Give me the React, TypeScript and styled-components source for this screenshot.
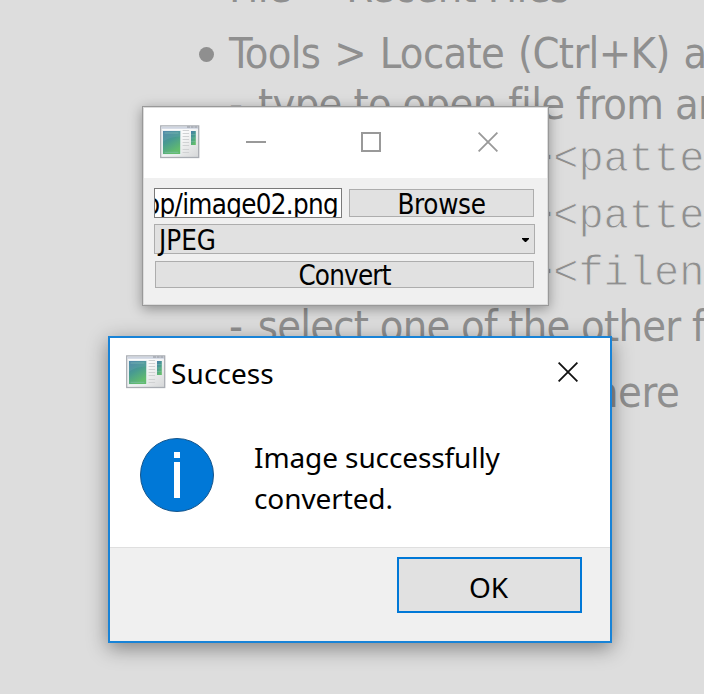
import React from 'react';
import styled, { createGlobalStyle } from 'styled-components';

const GlobalStyle = createGlobalStyle`
  * { box-sizing: border-box; }
  body { margin: 0; overflow: hidden; background: #dddddd; }
  button, input { font: inherit; margin: 0; padding: 0; border-radius: 0; }
`;

const uiFont = '"DejaVu Sans Condensed", "DejaVu Sans", sans-serif';
const dialogFont = '"Noto Sans", "Open Sans", sans-serif';

const Desktop = styled.main`
  position: relative;
  width: 704px;
  height: 694px;
  overflow: hidden;
  background: #dddddd;
`;

const Notes = styled.div`
  display: flex;
  flex-direction: column;
  padding-left: 229px;
  color: #8f8f8f;
`;

const Line = styled.div<{ $gap: number; $tracking?: number; $indent?: number; $words?: number }>`
  display: flex;
  align-items: center;
  flex-shrink: 0;
  height: 50px;
  margin-top: ${(p) => p.$gap}px;
  margin-left: ${(p) => p.$indent ?? 0}px;
  font: 43px/50px ${uiFont};
  letter-spacing: ${(p) => p.$tracking ?? 0}px;
  word-spacing: ${(p) => p.$words ?? 0}px;
  white-space: pre;
`;

const CodeLine = styled(Line)`
  font: 42px/50px "Liberation Mono", monospace;
  -webkit-text-stroke: 0.9px #dddddd;
`;

const Bullet = styled.span`
  flex: none;
  width: 15px;
  height: 15px;
  margin: 2px 15px 0 -30px;
  border-radius: 50%;
  background: #8f8f8f;
`;

const Dash = styled.span`
  flex: none;
  margin-right: 4px;
`;

const ConverterWindow = styled.section`
  position: absolute;
  left: 142px;
  top: 106px;
  width: 407px;
  height: 200px;
  display: flex;
  flex-direction: column;
  border: 1px solid #999999;
  background: #f0f0f0;
  box-shadow: inset 0 0 0 1px #dcdcdc, 0 3px 12px rgba(0, 0, 0, 0.36);
`;

const TitleBar = styled.header`
  display: flex;
  align-items: center;
  flex-shrink: 0;
  height: 70px;
  margin: 1px 1px 0;
  padding: 0 49px 2px 16px;
  background: #ffffff;
`;

const WindowControls = styled.div`
  display: flex;
  flex: 1;
  justify-content: space-between;
  margin-left: 46px;
`;

const Form = styled.div`
  display: flex;
  flex-direction: column;
  padding: 10px 13px 0 11px;
  font: 27.5px/30px ${uiFont};
  color: #000;
`;

const FileRow = styled.div`
  display: flex;
  align-items: center;
  height: 30px;
  gap: 7px;
  padding-right: 1px;
`;

const PathField = styled.div`
  display: flex;
  justify-content: flex-end;
  width: 188px;
  height: 30px;
  padding-right: 3px;
  overflow: hidden;
  border: 1px solid #7a7a7a;
  background: #fff;
  line-height: 31px;
  letter-spacing: -0.7px;
  white-space: nowrap;
`;

const FlatButton = styled.button<{ $wide?: boolean }>`
  display: flex;
  align-items: center;
  justify-content: center;
  flex: ${(p) => (p.$wide ? 'none' : 1)};
  height: ${(p) => (p.$wide ? 27 : 28)}px;
  margin: ${(p) => (p.$wide ? '7px 1px 0 1px' : '0')};
  border: 1px solid #adadad;
  background: #e1e1e1;
  color: #000;
  letter-spacing: ${(p) => (p.$wide ? -0.8 : -0.3)}px;
  line-height: 27px;
`;

const Label = styled.span<{ $shift: number }>`
  display: block;
  padding-top: ${(p) => p.$shift}px;
`;

const Combo = styled.div`
  display: flex;
  align-items: center;
  justify-content: space-between;
  height: 30px;
  margin-top: 6px;
  padding: 2px 5px 0 4px;
  border: 1px solid #adadad;
  background: #e1e1e1;
`;

const Dialog = styled.section`
  position: absolute;
  left: 108px;
  top: 336px;
  width: 504px;
  height: 307px;
  display: flex;
  flex-direction: column;
  border: 2px solid #1883d7;
  background: #fff;
  color: #000;
  font: 28px/41px ${dialogFont};
  box-shadow: 0 5px 19px rgba(0, 0, 0, 0.42);
`;

const DialogTitle = styled.header`
  display: flex;
  align-items: center;
  height: 70px;
  padding: 0 32px 2px 16px;
`;

const DialogName = styled.span`
  flex: 1;
  padding: 2px 0 0 5px;
  letter-spacing: 0.1px;
`;

const DialogBody = styled.div`
  display: flex;
  align-items: flex-start;
  flex: 1;
  padding: 30px 30px 0;
`;

const Message = styled.p`
  width: 260px;
  margin: -1px 0 0 40px;
  letter-spacing: -0.1px;
`;

const DialogFooter = styled.footer`
  display: flex;
  justify-content: flex-end;
  align-items: flex-start;
  height: 94px;
  padding: 9px 28px 0;
  border-top: 1px solid #dfdfdf;
  background: #f0f0f0;
`;

const OkButton = styled.button`
  width: 185px;
  height: 56px;
  border: 2px solid #0078d7;
  background: #e1e1e1;
  color: #000;
  padding: 4px 2px 0 0;
`;

const AppIcon = () => (
  <svg width="40" height="34" viewBox="0 0 40 34">
    <defs>
      <linearGradient id="pane" x1="0" y1="0" x2="0.45" y2="1">
        <stop offset="0" stopColor="#477da8" />
        <stop offset="0.5" stopColor="#489b91" />
        <stop offset="1" stopColor="#62bc6d" />
      </linearGradient>
      <linearGradient id="sheet" x1="0" y1="0" x2="1" y2="1">
        <stop offset="0.4" stopColor="#fbfbfb" />
        <stop offset="1" stopColor="#d5d7d8" />
      </linearGradient>
    </defs>
    <rect x="0.7" y="0.9" width="38" height="31.6" fill="url(#sheet)" stroke="#a9adb3" strokeWidth="1.3" />
    <rect x="1.4" y="1.6" width="36.6" height="2.2" fill="#cfd5e1" />
    <path d="M27 2h11" stroke="#a3a7ae" strokeWidth="1.6" strokeDasharray="3 0.7" />
    <rect x="2.2" y="5.2" width="19" height="25" fill="#e7eef0" />
    <rect x="3" y="6" width="17.2" height="23" fill="url(#pane)" />
    <path d="M3 17C8 13 14 12 20.2 11.6V6H3z" fill="#6caab5" opacity=".28" />
    <path d="M4.5 8h14M4.5 27.3h14" stroke="#86c2b8" strokeWidth=".8" opacity=".75" />
    <path d="M22.6 5.5h6.5M22.6 8.5h6.5M22.6 11.5h6.5M22.6 14.5h6.5M22.6 17.5h6.5M22.6 20.5h6.5M22.6 24.5h6.5M22.6 27.5h6.5" stroke="#d0d2d3" strokeWidth="1.1" />
    <rect x="31" y="6" width="4.8" height="14" fill="url(#pane)" />
    <path d="M31 9.5h4.8M31 13h4.8M31 16.5h4.8" stroke="#8fc4b4" strokeWidth=".6" opacity=".6" />
  </svg>
);

const Minimize = () => (
  <svg width="20" height="20" viewBox="0 0 20 20">
    <path d="M0 10h20" stroke="#999" strokeWidth="2" />
  </svg>
);

const Maximize = () => (
  <svg width="22" height="20" viewBox="0 0 22 20">
    <rect x="1" y="1" width="18" height="18" fill="none" stroke="#999" strokeWidth="2" />
  </svg>
);

const Close = ({ color }: { color: string }) => (
  <svg width="20" height="20" viewBox="0 0 20 20">
    <path d="M.6.6l18.8 18.8M19.4.6L.6 19.4" stroke={color} strokeWidth="1.8" />
  </svg>
);

const ComboArrow = () => (
  <svg width="7" height="4" viewBox="0 0 7 4">
    <path d="M0 0h7v1L4 4H3L0 1z" fill="#000" />
  </svg>
);

const InfoIcon = () => (
  <svg width="74" height="74" viewBox="0 0 74 74">
    <circle cx="37" cy="37" r="36.5" fill="#0078d7" stroke="#14558c" strokeWidth="1" />
    <path d="M34 14h6v6h-6zM34 24h6v36h-6z" fill="#fff" />
  </svg>
);

export default function App() {
  return (
    <Desktop>
      <GlobalStyle />
      <Notes>
        <Line $gap={-38} $tracking={-0.6}>{'File > Recent Files'}</Line>
        <Line $gap={16} $tracking={-0.65} $words={2.2}>
          <Bullet />
          {'Tools > Locate (Ctrl+K) and'}
        </Line>
        <Line $gap={0.5} $tracking={-0.65}>
          <Dash>-</Dash>
          {' type to open file from any'}
        </Line>
        <CodeLine $gap={6.5} $indent={299}>{'><pattern>'}</CodeLine>
        <CodeLine $gap={7} $indent={299}>{'><pattern>'}</CodeLine>
        <CodeLine $gap={7} $indent={299}>{'><filename>'}</CodeLine>
        <Line $gap={2} $tracking={-0.75}>
          <Dash>-</Dash>
          {' select one of the other filters'}
        </Line>
        <Line $gap={16} $indent={365} $tracking={-0.4}>here</Line>
      </Notes>

      <ConverterWindow>
        <TitleBar>
          <AppIcon />
          <WindowControls>
            <Minimize />
            <Maximize />
            <Close color="#999" />
          </WindowControls>
        </TitleBar>
        <Form>
          <FileRow>
            <PathField>op/image02.png</PathField>
            <FlatButton><Label $shift={3}>Browse</Label></FlatButton>
          </FileRow>
          <Combo>
            JPEG
            <ComboArrow />
          </Combo>
          <FlatButton $wide><Label $shift={2}>Convert</Label></FlatButton>
        </Form>
      </ConverterWindow>

      <Dialog>
        <DialogTitle>
          <AppIcon />
          <DialogName>Success</DialogName>
          <Close color="#111" />
        </DialogTitle>
        <DialogBody>
          <InfoIcon />
          <Message>Image successfully converted.</Message>
        </DialogBody>
        <DialogFooter>
          <OkButton>OK</OkButton>
        </DialogFooter>
      </Dialog>
    </Desktop>
  );
}
